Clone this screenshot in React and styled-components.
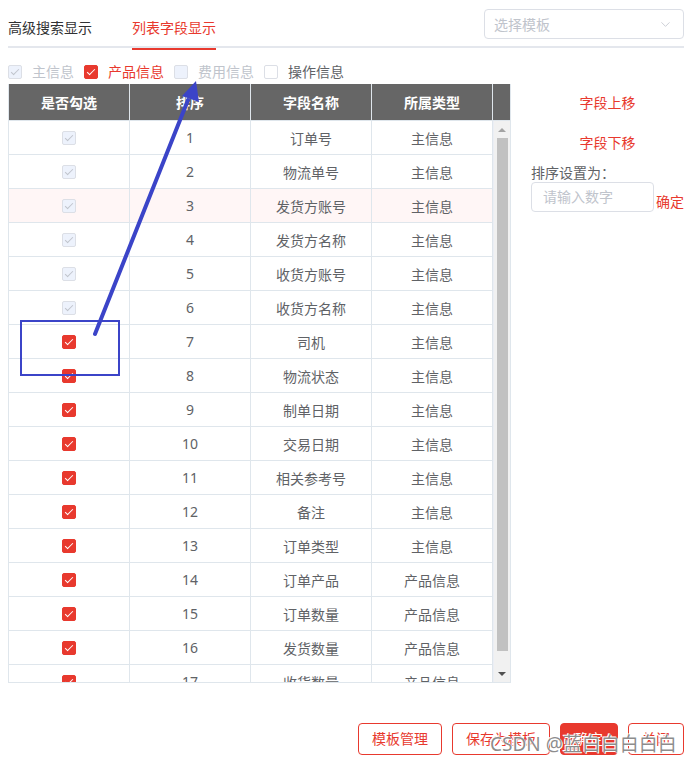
import React from "react"
import styled, { createGlobalStyle } from "styled-components"
import { ChevronDown } from "lucide-react"

const RED = "#e8392e"
const TEXT = "#606266"
const LINE = "#dfe6ec"

const GlobalStyle = createGlobalStyle`
  * { box-sizing: border-box; }
  body {
    margin: 0;
    background: #fff;
    font-family: "Noto Sans", "Noto Sans CJK SC", sans-serif;
    font-size: 14px;
    color: ${TEXT};
  }
`

const Page = styled.div`
  position: relative;
  width: 694px;
  height: 762px;
  padding: 8px 10px 0 8px;
  display: flex;
  flex-direction: column;
`

const TopBar = styled.div`
  display: flex;
  justify-content: space-between;
  align-items: flex-start;
  border-bottom: 2px solid #e4e7ed;
  height: 40px;
`

const Tabs = styled.div`
  display: flex;
`

const Tab = styled.div`
  position: relative;
  height: 40px;
  line-height: 40px;
  padding: 0 20px;
  color: ${(p) => (p.$active ? RED : "#303133")};
  &:first-child { padding-left: 0; }
  &::after {
    content: "";
    display: ${(p) => (p.$active ? "block" : "none")};
    position: absolute;
    left: 20px;
    right: 20px;
    bottom: -2px;
    height: 2px;
    background: ${RED};
  }
`

const Select = styled.div`
  width: 200px;
  height: 30px;
  margin-top: 1px;
  border: 1px solid #dcdfe6;
  border-radius: 4px;
  display: flex;
  align-items: center;
  justify-content: space-between;
  padding: 0 10px 0 9px;
  color: #c0c4cc;
`

const Groups = styled.div`
  display: flex;
  align-items: center;
  height: 20px;
  margin-top: 14px;
`

const Check = styled.span`
  position: relative;
  display: inline-block;
  flex: none;
  width: 14px;
  height: 14px;
  border-radius: 2px;
  border: 1px solid ${(p) => (p.$on && !p.$disabled ? RED : "#dcdfe6")};
  background: ${(p) =>
    p.$on && !p.$disabled ? RED : p.$disabled ? "#edf2fc" : "#fff"};
  &::after {
    content: "";
    display: ${(p) => (p.$on ? "block" : "none")};
    position: absolute;
    left: 4px;
    top: 1px;
    width: 3px;
    height: 7px;
    border: 1px solid ${(p) => (p.$disabled ? "#c0c4cc" : "#fff")};
    border-left: 0;
    border-top: 0;
    transform: rotate(45deg);
  }
`

const Group = styled.label`
  display: flex;
  align-items: center;
  margin-right: 10px;
  line-height: 20px;
  color: ${(p) => (p.$disabled ? "#c0c4cc" : p.$on ? RED : TEXT)};
  span + span { padding-left: 10px; }
`

const Main = styled.div`
  display: flex;
  align-items: flex-start;
  margin-top: 2px;
`

const Table = styled.div`
  width: 503px;
  border: 1px solid ${LINE};
  border-top: 0;
`

const HeadRow = styled.div`
  display: grid;
  grid-template-columns: repeat(4, 121px) 17px;
  background: #666;
  height: 37px;
  border-bottom: 1px solid ${LINE};
`

const HeadCell = styled.div`
  display: flex;
  align-items: center;
  justify-content: center;
  color: #fff;
  font-weight: 700;
  border-right: 1px solid ${LINE};
  &:last-child { border-right: 0; }
`

const Body = styled.div`
  display: flex;
  height: 561px;
`

const Rows = styled.div`
  flex: 0 0 484px;
  overflow: hidden;
`

const ScrollTrack = styled.div`
  flex: 0 0 17px;
  background: #f1f1f1;
  border-left: 1px solid #ebeef5;
  display: flex;
  flex-direction: column;
  align-items: center;
`

const Arrow = styled.div`
  flex: none;
  height: 17px;
  margin-top: ${(p) => (p.$down ? "auto" : "0")};
  display: flex;
  align-items: center;
  justify-content: center;
  &::before {
    content: "";
    border-left: 4px solid transparent;
    border-right: 4px solid transparent;
    ${(p) =>
      p.$down
        ? "border-top: 4px solid #505050;"
        : "border-bottom: 4px solid #a3a3a3;"}
  }
`

const Thumb = styled.div`
  width: 11px;
  height: 513px;
  background: #c1c1c1;
`

const Row = styled.div`
  display: grid;
  grid-template-columns: repeat(4, 121px);
  height: 34px;
  background: ${(p) => (p.$hover ? "#fff6f6" : "#fff")};
`

const Cell = styled.div`
  display: flex;
  align-items: center;
  justify-content: center;
  border-right: 1px solid ${LINE};
  border-bottom: 1px solid ${LINE};
`

const Side = styled.div`
  width: 154px;
  margin-left: 20px;
  display: flex;
  flex-direction: column;
`

const LinkButton = styled.div`
  text-align: center;
  color: ${RED};
  line-height: 20px;
  margin-top: ${(p) => p.$gap}px;
`

const SortLabel = styled.div`
  line-height: 18px;
  margin-top: 11px;
`

const SortRow = styled.div`
  display: flex;
  align-items: flex-end;
`

const Input = styled.div`
  width: 123px;
  height: 30px;
  border: 1px solid #dcdfe6;
  border-radius: 4px;
  padding: 0 11px;
  line-height: 28px;
  color: #c0c4cc;
`

const Confirm = styled.span`
  color: ${RED};
  margin-left: 2px;
  line-height: 20px;
`

const Footer = styled.div`
  display: flex;
  justify-content: flex-end;
  gap: 10px;
  margin-top: 40px;
`

const Button = styled.div`
  height: 32px;
  line-height: 30px;
  padding: 0 ${(p) => (p.$primary ? 14 : 13)}px;
  border-radius: 4px;
  border: 1px solid ${RED};
  background: ${(p) => (p.$primary ? RED : "#fff")};
  color: ${(p) => (p.$primary ? "#fff" : RED)};
`

const Watermark = styled.div`
  position: absolute;
  left: 490px;
  top: 731px;
  font-size: 19px;
  line-height: 26px;
  color: rgba(120, 120, 120, 0.85);
  text-shadow: 0 0 1px #fff, 1px 1px 0 #fff, -1px -1px 0 #fff;
  pointer-events: none;
  white-space: nowrap;
`

const Marks = styled.svg`
  position: absolute;
  left: 0;
  top: 0;
  pointer-events: none;
`

const rows = [
  ["订单号", "主信息", "lock"],
  ["物流单号", "主信息", "lock"],
  ["发货方账号", "主信息", "lock"],
  ["发货方名称", "主信息", "lock"],
  ["收货方账号", "主信息", "lock"],
  ["收货方名称", "主信息", "lock"],
  ["司机", "主信息"],
  ["物流状态", "主信息"],
  ["制单日期", "主信息"],
  ["交易日期", "主信息"],
  ["相关参考号", "主信息"],
  ["备注", "主信息"],
  ["订单类型", "主信息"],
  ["订单产品", "产品信息"],
  ["订单数量", "产品信息"],
  ["发货数量", "产品信息"],
  ["收货数量", "产品信息"],
]

const groups = [
  { label: "主信息", on: true, disabled: true },
  { label: "产品信息", on: true },
  { label: "费用信息", disabled: true },
  { label: "操作信息" },
]

export default function App() {
  return (
    <Page>
      <GlobalStyle />
      <TopBar>
        <Tabs>
          <Tab>高级搜索显示</Tab>
          <Tab $active>列表字段显示</Tab>
        </Tabs>
        <Select>
          选择模板
          <ChevronDown size={15} strokeWidth={1.3} color="#c0c4cc" />
        </Select>
      </TopBar>

      <Groups>
        {groups.map((g) => (
          <Group key={g.label} $on={g.on} $disabled={g.disabled}>
            <Check $on={g.on} $disabled={g.disabled} />
            <span>{g.label}</span>
          </Group>
        ))}
      </Groups>

      <Main>
        <Table>
          <HeadRow>
            <HeadCell>是否勾选</HeadCell>
            <HeadCell>排序</HeadCell>
            <HeadCell>字段名称</HeadCell>
            <HeadCell>所属类型</HeadCell>
            <HeadCell />
          </HeadRow>
          <Body>
            <Rows>
              {rows.map(([name, type, lock], i) => (
                <Row key={name} $hover={i === 2}>
                  <Cell>
                    <Check $on $disabled={lock === "lock"} />
                  </Cell>
                  <Cell>{i + 1}</Cell>
                  <Cell>{name}</Cell>
                  <Cell>{type}</Cell>
                </Row>
              ))}
            </Rows>
            <ScrollTrack>
              <Arrow />
              <Thumb />
              <Arrow $down />
            </ScrollTrack>
          </Body>
        </Table>

        <Side>
          <LinkButton $gap={9}>字段上移</LinkButton>
          <LinkButton $gap={20}>字段下移</LinkButton>
          <SortLabel>排序设置为：</SortLabel>
          <SortRow>
            <Input>请输入数字</Input>
            <Confirm>确定</Confirm>
          </SortRow>
        </Side>
      </Main>

      <Footer>
        <Button>模板管理</Button>
        <Button>保存为模板</Button>
        <Button $primary>确定</Button>
        <Button>关闭</Button>
      </Footer>

      <Watermark>CSDN @蓝白白白白白</Watermark>

      <Marks width="694" height="762">
        <line x1="95" y1="334" x2="188" y2="100" stroke="#3b44c8" strokeWidth="4" strokeLinecap="round" />
        <polygon points="196,81 199,102 182,96" fill="#3b44c8" />
        <rect x="21" y="321" width="98" height="54" fill="none" stroke="#3b44c8" strokeWidth="2" />
      </Marks>
    </Page>
  )
}
